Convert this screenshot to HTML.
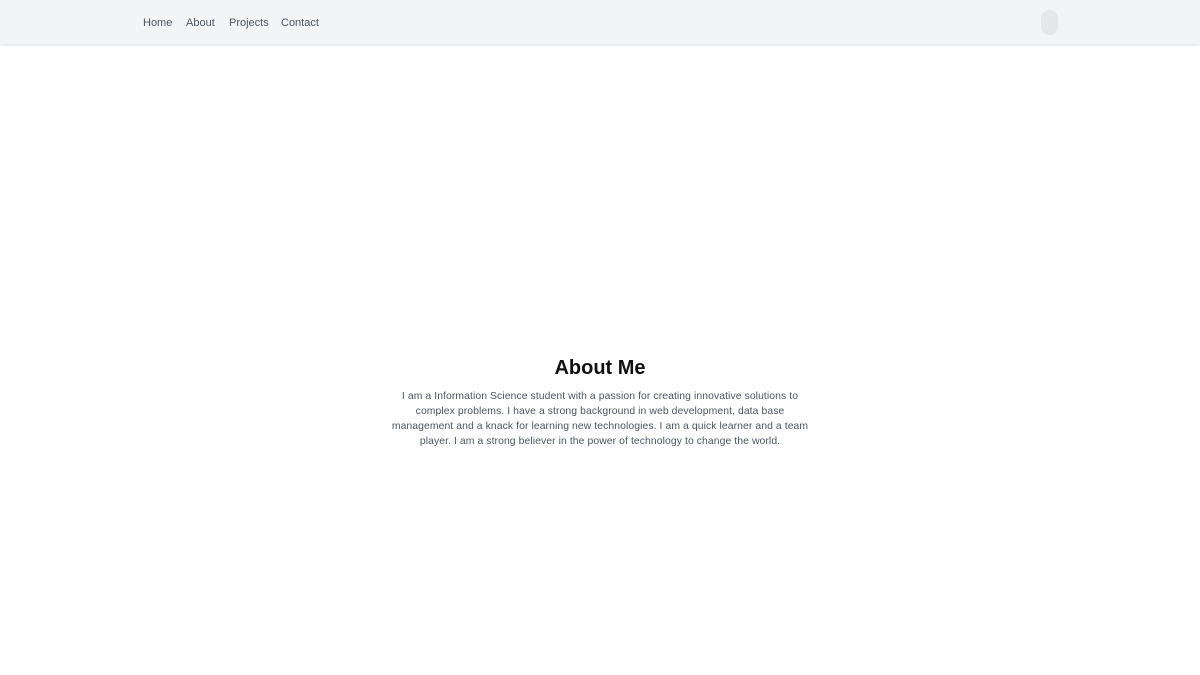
<!DOCTYPE html>
<html><head><style>
body{margin:0;width:1200px;height:675px;background:#fff;font-family:"Liberation Sans",sans-serif;overflow:hidden;position:relative}
nav{position:absolute;top:0;left:0;width:1200px;height:44px;background:#f3f4f6;box-shadow:0 1px 3px rgba(0,0,0,.15)}
nav a{position:absolute;top:17px;font-size:11px;color:#4b5563;text-decoration:none;letter-spacing:0}
.pill{position:absolute;left:1041px;top:10px;width:17px;height:25px;border-radius:9px;background:#e5e7eb}
h1{position:absolute;top:357px;left:0;width:1200px;text-align:center;margin:0;font-size:20px;font-weight:bold;color:#111}
p{position:absolute;top:389px;left:391px;width:418px;margin:0;text-align:center;font-size:10.4px;line-height:15px;color:#4b5563;letter-spacing:.08px}
</style></head><body>
<nav>
<a style="left:143px">Home</a><a style="left:186px">About</a><a style="left:229px">Projects</a><a style="left:281px">Contact</a>
<div class="pill"></div>
</nav>
<h1>About Me</h1>
<p>I am a Information Science student with a passion for creating innovative solutions to complex problems. I have a strong background in web development, data base management and a knack for learning new technologies. I am a quick learner and a team player. I am a strong believer in the power of technology to change the world.</p>
</body></html>
